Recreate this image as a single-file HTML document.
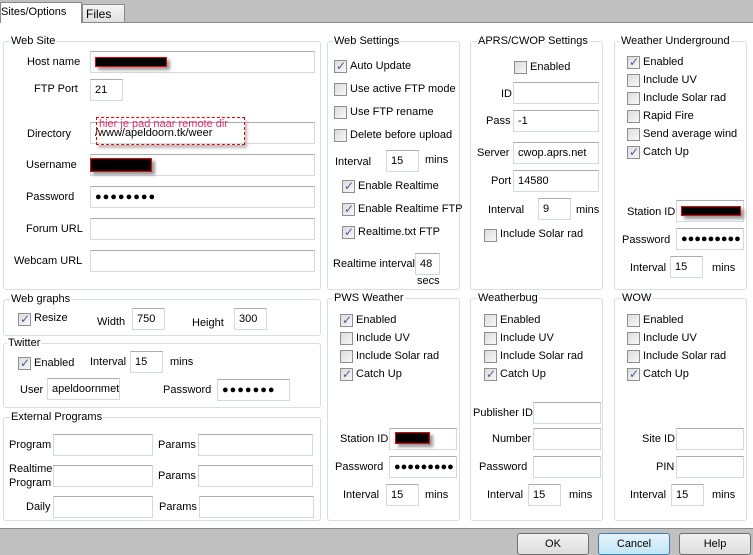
<!DOCTYPE html>
<html><head><style>
*{box-sizing:border-box;margin:0;padding:0}
body{width:753px;height:554px;position:relative;background:#c0c0c0;font-family:"Liberation Sans",sans-serif;font-size:11px;color:#000;overflow:hidden}
div,span{position:absolute}
.pg{left:0;top:22px;width:753px;height:507px;background:#fff;border-top:1px solid #8a8a8a;border-bottom:1px solid #8a8a8a}
.g{border:1px solid #d5dfe5;border-radius:3px}
.gt{background:#fff;padding:0 1px;top:-8px;left:6px;white-space:nowrap;line-height:14px}
.i{border:1px solid #d4d9e0;border-top-color:#abadb3;background:#fff;height:22px;line-height:20px;padding-left:4px;white-space:nowrap;overflow:hidden}
.l{white-space:nowrap;line-height:14px}
.c{width:13px;height:13px;border:1px solid #8e8f8f;background:linear-gradient(135deg,#dcdcdc,#f8f8f8);}
.c.k::after{content:"✓";position:absolute;left:1px;top:-2px;font-size:12px;font-weight:bold;color:#4a5f97;font-family:"DejaVu Sans",sans-serif}
.b{height:22px;border:1px solid #707070;border-radius:3px;background:linear-gradient(#f2f2f2,#dddddd);text-align:center;line-height:20px}
.r{background:#000;border:1px solid #e00;height:10px;box-shadow:3px 3px 3px #999}
</style></head><body>
<div style="left:0;top:2px;width:82px;height:21px;background:#fff;border:1px solid #8a8a8a;border-bottom:none;z-index:2;line-height:19px;padding-left:0">Sites/Options</div>
<div style="left:82px;top:4px;width:43px;height:19px;background:linear-gradient(#f4f4f4,#e0e0e0);border:1px solid #8a8a8a;line-height:18px;padding-left:3px;font-size:12px">Files</div>
<div class="pg"></div>

<!-- Web Site -->
<div class="g" style="left:3px;top:41px;width:318px;height:249px"><span class="gt">Web Site</span></div>
<span class="l" style="left:27px;top:55px">Host name</span>
<div class="i" style="left:90px;top:51px;width:225px"></div>
<div class="r" style="left:95px;top:57px;width:72px"></div>
<span class="l" style="left:34px;top:82px">FTP Port</span>
<div class="i" style="left:90px;top:79px;width:33px">21</div>
<span class="l" style="left:27px;top:127px">Directory</span>
<div class="i" style="left:90px;top:122px;width:225px">/www/apeldoorn.tk/weer</div>
<div style="left:96px;top:117px;width:149px;height:28px;border:1px dashed #e00;color:#e0306a;line-height:13px;padding-left:2px;box-shadow:2px 3px 3px #bbb;white-space:nowrap">hier je pad naar remote dir</div>
<span class="l" style="left:26px;top:158px">Username</span>
<div class="i" style="left:90px;top:154px;width:225px"></div>
<div class="r" style="left:90px;top:158px;width:62px;height:14px"></div>
<span class="l" style="left:26px;top:190px">Password</span>
<div class="i" style="left:90px;top:186px;width:225px;letter-spacing:1px">●●●●●●●●</div>
<span class="l" style="left:26px;top:222px">Forum URL</span>
<div class="i" style="left:90px;top:218px;width:225px"></div>
<span class="l" style="left:14px;top:254px">Webcam URL</span>
<div class="i" style="left:90px;top:250px;width:225px"></div>

<!-- Web graphs -->
<div class="g" style="left:3px;top:299px;width:318px;height:37px"><span class="gt">Web graphs</span></div>
<div class="c k" style="left:18px;top:313px"></div><span class="l" style="left:34px;top:311px">Resize</span>
<span class="l" style="left:97px;top:315px">Width</span>
<div class="i" style="left:132px;top:308px;width:33px">750</div>
<span class="l" style="left:192px;top:316px">Height</span>
<div class="i" style="left:234px;top:308px;width:33px">300</div>

<!-- Twitter -->
<div class="g" style="left:3px;top:343px;width:318px;height:65px"><span class="gt" style="left:3px">Twitter</span></div>
<div class="c k" style="left:18px;top:357px"></div><span class="l" style="left:34px;top:356px">Enabled</span>
<span class="l" style="left:90px;top:355px">Interval</span>
<div class="i" style="left:130px;top:351px;width:33px">15</div>
<span class="l" style="left:170px;top:355px">mins</span>
<span class="l" style="left:20px;top:383px">User</span>
<div class="i" style="left:47px;top:378px;width:73px">apeldoornmet</div>
<span class="l" style="left:163px;top:383px">Password</span>
<div class="i" style="left:217px;top:379px;width:73px;letter-spacing:1px">●●●●●●●</div>

<!-- External Programs -->
<div class="g" style="left:3px;top:417px;width:318px;height:104px"><span class="gt" style="left:6px">External Programs</span></div>
<span class="l" style="left:9px;top:438px">Program</span>
<div class="i" style="left:53px;top:434px;width:100px"></div>
<span class="l" style="left:158px;top:438px">Params</span>
<div class="i" style="left:198px;top:434px;width:115px"></div>
<span class="l" style="left:9px;top:462px">Realtime</span>
<span class="l" style="left:9px;top:476px">Program</span>
<div class="i" style="left:53px;top:465px;width:100px"></div>
<span class="l" style="left:158px;top:469px">Params</span>
<div class="i" style="left:198px;top:465px;width:115px"></div>
<span class="l" style="left:26px;top:500px">Daily</span>
<div class="i" style="left:53px;top:496px;width:100px"></div>
<span class="l" style="left:159px;top:500px">Params</span>
<div class="i" style="left:199px;top:496px;width:115px"></div>

<!-- Web Settings -->
<div class="g" style="left:327px;top:41px;width:133px;height:249px"><span class="gt" style="left:5px">Web Settings</span></div>
<div class="c k" style="left:334px;top:60px"></div><span class="l" style="left:350px;top:59px">Auto Update</span>
<div class="c" style="left:334px;top:83px"></div><span class="l" style="left:350px;top:82px">Use active FTP mode</span>
<div class="c" style="left:334px;top:106px"></div><span class="l" style="left:350px;top:105px">Use FTP rename</span>
<div class="c" style="left:334px;top:129px"></div><span class="l" style="left:350px;top:128px">Delete before upload</span>
<span class="l" style="left:335px;top:155px">Interval</span>
<div class="i" style="left:386px;top:150px;width:33px">15</div>
<span class="l" style="left:425px;top:153px">mins</span>
<div class="c k" style="left:342px;top:180px"></div><span class="l" style="left:358px;top:179px">Enable Realtime</span>
<div class="c k" style="left:342px;top:203px"></div><span class="l" style="left:358px;top:202px">Enable Realtime FTP</span>
<div class="c k" style="left:342px;top:226px"></div><span class="l" style="left:358px;top:225px">Realtime.txt FTP</span>
<span class="l" style="left:333px;top:257px">Realtime interval</span>
<div class="i" style="left:415px;top:253px;width:25px">48</div>
<span class="l" style="left:417px;top:274px">secs</span>

<!-- APRS -->
<div class="g" style="left:470px;top:41px;width:133px;height:249px"><span class="gt" style="left:6px">APRS/CWOP Settings</span></div>
<div class="c" style="left:514px;top:61px"></div><span class="l" style="left:530px;top:60px">Enabled</span>
<span class="l" style="left:501px;top:87px">ID</span>
<div class="i" style="left:513px;top:82px;width:86px"></div>
<span class="l" style="left:486px;top:114px">Pass</span>
<div class="i" style="left:513px;top:110px;width:86px">-1</div>
<span class="l" style="left:477px;top:146px">Server</span>
<div class="i" style="left:513px;top:142px;width:86px">cwop.aprs.net</div>
<span class="l" style="left:491px;top:174px">Port</span>
<div class="i" style="left:513px;top:170px;width:86px">14580</div>
<span class="l" style="left:488px;top:203px">Interval</span>
<div class="i" style="left:538px;top:198px;width:33px">9</div>
<span class="l" style="left:576px;top:203px">mins</span>
<div class="c" style="left:484px;top:229px"></div><span class="l" style="left:500px;top:227px">Include Solar rad</span>

<!-- WU -->
<div class="g" style="left:614px;top:41px;width:133px;height:249px"><span class="gt" style="left:5px">Weather Underground</span></div>
<div class="c k" style="left:627px;top:56px"></div><span class="l" style="left:643px;top:55px">Enabled</span>
<div class="c" style="left:627px;top:74px"></div><span class="l" style="left:643px;top:73px">Include UV</span>
<div class="c" style="left:627px;top:92px"></div><span class="l" style="left:643px;top:91px">Include Solar rad</span>
<div class="c" style="left:627px;top:110px"></div><span class="l" style="left:643px;top:109px">Rapid Fire</span>
<div class="c" style="left:627px;top:128px"></div><span class="l" style="left:643px;top:127px">Send average wind</span>
<div class="c k" style="left:627px;top:146px"></div><span class="l" style="left:643px;top:145px">Catch Up</span>
<span class="l" style="left:627px;top:205px">Station ID</span>
<div class="i" style="left:676px;top:200px;width:68px"></div>
<div class="r" style="left:681px;top:206px;width:60px"></div>
<span class="l" style="left:622px;top:233px">Password</span>
<div class="i" style="left:676px;top:228px;width:68px;letter-spacing:0px">●●●●●●●●●</div>
<span class="l" style="left:630px;top:261px">Interval</span>
<div class="i" style="left:670px;top:256px;width:33px">15</div>
<span class="l" style="left:712px;top:261px">mins</span>

<!-- PWS -->
<div class="g" style="left:327px;top:298px;width:133px;height:223px"><span class="gt" style="left:5px">PWS Weather</span></div>
<div class="c k" style="left:340px;top:314px"></div><span class="l" style="left:356px;top:313px">Enabled</span>
<div class="c" style="left:340px;top:332px"></div><span class="l" style="left:356px;top:331px">Include UV</span>
<div class="c" style="left:340px;top:350px"></div><span class="l" style="left:356px;top:349px">Include Solar rad</span>
<div class="c k" style="left:340px;top:368px"></div><span class="l" style="left:356px;top:367px">Catch Up</span>
<span class="l" style="left:340px;top:432px">Station ID</span>
<div class="i" style="left:389px;top:428px;width:68px"></div>
<div class="r" style="left:395px;top:432px;width:35px;height:12px"></div>
<span class="l" style="left:335px;top:460px">Password</span>
<div class="i" style="left:389px;top:456px;width:68px">●●●●●●●●●</div>
<span class="l" style="left:343px;top:488px">Interval</span>
<div class="i" style="left:386px;top:484px;width:33px">15</div>
<span class="l" style="left:425px;top:488px">mins</span>

<!-- Weatherbug -->
<div class="g" style="left:470px;top:298px;width:133px;height:223px"><span class="gt" style="left:6px">Weatherbug</span></div>
<div class="c" style="left:484px;top:314px"></div><span class="l" style="left:500px;top:313px">Enabled</span>
<div class="c" style="left:484px;top:332px"></div><span class="l" style="left:500px;top:331px">Include UV</span>
<div class="c" style="left:484px;top:350px"></div><span class="l" style="left:500px;top:349px">Include Solar rad</span>
<div class="c k" style="left:484px;top:368px"></div><span class="l" style="left:500px;top:367px">Catch Up</span>
<span class="l" style="left:473px;top:406px">Publisher ID</span>
<div class="i" style="left:533px;top:402px;width:68px"></div>
<span class="l" style="left:492px;top:432px">Number</span>
<div class="i" style="left:533px;top:428px;width:68px"></div>
<span class="l" style="left:479px;top:460px">Password</span>
<div class="i" style="left:533px;top:456px;width:68px"></div>
<span class="l" style="left:487px;top:488px">Interval</span>
<div class="i" style="left:528px;top:484px;width:33px">15</div>
<span class="l" style="left:569px;top:488px">mins</span>

<!-- WOW -->
<div class="g" style="left:614px;top:298px;width:133px;height:223px"><span class="gt" style="left:6px">WOW</span></div>
<div class="c" style="left:627px;top:314px"></div><span class="l" style="left:643px;top:313px">Enabled</span>
<div class="c" style="left:627px;top:332px"></div><span class="l" style="left:643px;top:331px">Include UV</span>
<div class="c" style="left:627px;top:350px"></div><span class="l" style="left:643px;top:349px">Include Solar rad</span>
<div class="c k" style="left:627px;top:368px"></div><span class="l" style="left:643px;top:367px">Catch Up</span>
<span class="l" style="left:642px;top:432px">Site ID</span>
<div class="i" style="left:676px;top:428px;width:68px"></div>
<span class="l" style="left:656px;top:460px">PIN</span>
<div class="i" style="left:676px;top:456px;width:68px"></div>
<span class="l" style="left:630px;top:488px">Interval</span>
<div class="i" style="left:671px;top:484px;width:33px">15</div>
<span class="l" style="left:712px;top:488px">mins</span>

<!-- buttons -->
<div class="b" style="left:517px;top:533px;width:72px">OK</div>
<div class="b" style="left:598px;top:533px;width:72px;border-color:#3c7fb1;background:linear-gradient(#e5f4fc,#c4e5f6)">Cancel</div>
<div class="b" style="left:679px;top:533px;width:72px">Help</div>
</body></html>
